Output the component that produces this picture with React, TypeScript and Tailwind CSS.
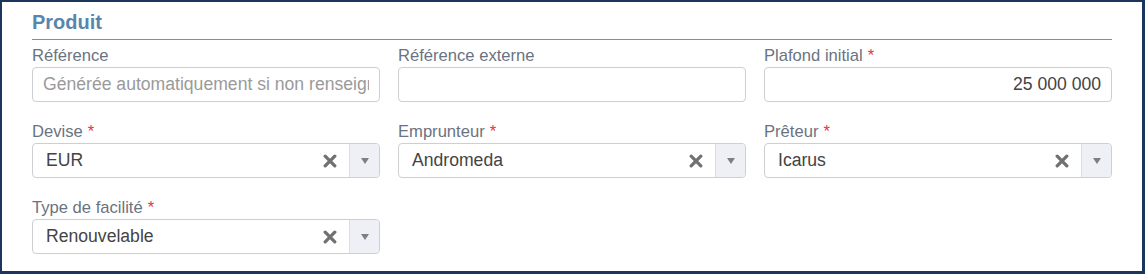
import React from 'react';

type Field = {
  label: string;
  required?: boolean;
};

const ClearIcon = () => (
  <svg width="14" height="14" viewBox="0 0 14 14" className="block">
    <path d="M2.2 2.2 L11.8 11.8 M11.8 2.2 L2.2 11.8" stroke="#717171" strokeWidth="3.3" strokeLinecap="round" />
  </svg>
);

const CaretIcon = () => (
  <svg width="8" height="6" viewBox="0 0 8 6" className="block">
    <path d="M0 0 H8 L4 6 Z" fill="#7b7f86" />
  </svg>
);

function Label({ label, required }: Field) {
  return (
    <div className="h-[21px] text-[16.6px] leading-5 whitespace-nowrap text-[#6a7381]">
      {label}
      {required && <span className="ml-[5px] text-[#e0383e]">*</span>}
    </div>
  );
}

function TextInput({ label, required, placeholder, value, right }: Field & { placeholder?: string; value?: string; right?: boolean }) {
  return (
    <div className="flex min-w-0 flex-col">
      <Label label={label} required={required} />
      <input
        type="text"
        readOnly
        defaultValue={value}
        placeholder={placeholder}
        className={`h-[35px] w-full rounded-[4px] border border-[#cdcfd3] bg-white px-[10px] text-[17.6px] text-[#444] outline-none placeholder:text-[#9a9a9a] ${
          right ? 'text-right' : 'text-left'
        }`}
      />
    </div>
  );
}

function SelectInput({ label, required, value }: Field & { value: string }) {
  return (
    <div className="flex flex-col">
      <Label label={label} required={required} />
      <div className="flex h-[35px] items-stretch rounded-[4px] border border-[#cdcfd3] bg-white">
        <div className="flex flex-1 items-center pl-[13px] text-[17.6px] text-[#444]">{value}</div>
        <div className="flex w-[38px] items-center justify-center">
          <ClearIcon />
        </div>
        <div className="flex w-[30px] items-center justify-center rounded-r-[4px] border-l border-[#dcdee2] bg-[#eef0f5]">
          <CaretIcon />
        </div>
      </div>
    </div>
  );
}

export default function App() {
  return (
    <div className="h-[274px] w-[1145px] border-t-2 border-r-[3px] border-b-[3px] border-l-2 border-[#1b365d] bg-white px-[30px] pt-[8px] font-[family-name:'Liberation_Sans',Arial,sans-serif]">
      {/* Section title */}
      <div className="border-b border-[#6d93b6] pb-[5px] text-[20px] leading-6 font-bold text-[#5786ad]">
        Produit
      </div>

      <div className="mt-[6px] grid grid-cols-3 gap-x-[18px] gap-y-[20px]">
        <TextInput label="Référence" placeholder="Générée automatiquement si non renseigné" />
        <TextInput label="Référence externe" />
        <TextInput label="Plafond initial" required value="25 000 000" right />

        <SelectInput label="Devise" required value="EUR" />
        <SelectInput label="Emprunteur" required value="Andromeda" />
        <SelectInput label="Prêteur" required value="Icarus" />

        <SelectInput label="Type de facilité" required value="Renouvelable" />
      </div>
    </div>
  );
}
